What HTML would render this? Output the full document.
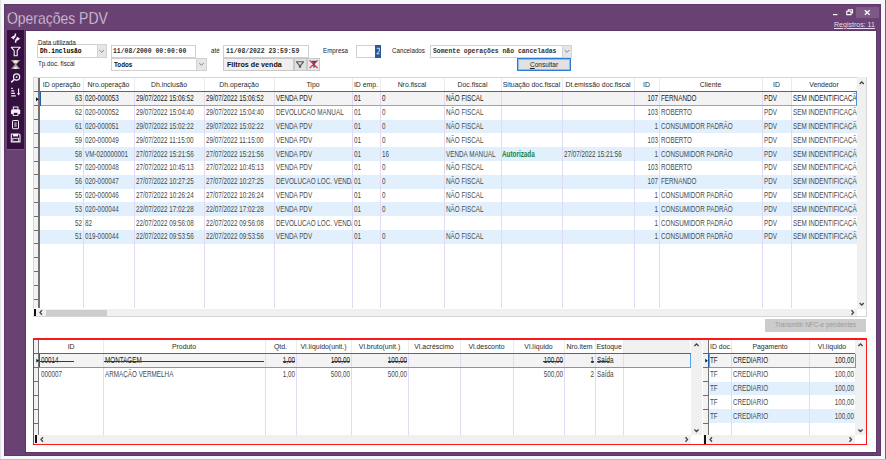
<!DOCTYPE html><html><head><meta charset="utf-8"><style>
*{margin:0;padding:0;box-sizing:border-box}
html,body{width:886px;height:460px;overflow:hidden;background:#fff}
body{position:relative;font-family:"Liberation Sans",sans-serif}
div{position:absolute}
.t{white-space:pre;line-height:1}
</style></head><body>
<div style="left:0px;top:0px;width:886px;height:460px;background:#f6f7fb"></div>
<div style="left:0px;top:0px;width:1px;height:460px;background:#e4e4e4"></div>
<div style="left:885px;top:0px;width:1px;height:460px;background:#6c6c6c"></div>
<div style="left:0px;top:459px;width:886px;height:1px;background:#bcbcbc"></div>
<div style="left:4px;top:4px;width:877px;height:452px;background:#694273;border:1px solid #5e3668"></div>
<div style="left:26px;top:31px;width:850px;height:421px;background:#ffffff;box-shadow:0 0 0 1px #5e3668"></div>
<div style="left:7px;top:30px;width:17px;height:119px;background:#340f40"></div>
<div class="t" style="left:7.3px;top:10.6px;transform:scaleX(0.872);transform-origin:left top;font-size:16px;color:#e6dcea;-webkit-text-stroke:0.35px #694273">Operações PDV</div>
<div style="left:856px;top:7px;width:23px;height:11px;background:#7c5a86"></div>
<svg style="position:absolute;left:0;top:0;overflow:visible" width="1" height="1"><path d="M833 14.6h4.4" stroke="#fff" stroke-width="1.2"/><path d="M846.8 11.3h4.2v3.3h-4.2z M848.3 11.3v-1.6h4.2v3.3h-1.5" fill="none" stroke="#fff" stroke-width="1.1"/><path d="M864.8 10.2l4.8 4.6M869.6 10.2l-4.8 4.6" stroke="#fff" stroke-width="1.2"/></svg>
<div class="t" style="left:834.2px;top:20.6px;transform:scaleX(0.925);transform-origin:left top;font-size:7.6px;color:#e4dcea;text-decoration:underline">Registros: 11</div>
<div class="t" style="left:37.8px;top:38.8px;transform:scaleX(0.78);transform-origin:left top;font-size:8px;color:#222;z-index:5">Data utilizada</div>
<div class="t" style="left:37.8px;top:60.4px;transform:scaleX(0.78);transform-origin:left top;font-size:8px;color:#222">Tp.doc. fiscal</div>
<div style="left:37px;top:44px;width:70px;height:14px;background:#fff;border:1px solid #d0d0d0"></div>
<div style="left:96.5px;top:44px;width:10.5px;height:14px;background:#e6e6e6;border:1px solid #d2d2d2"></div>
<svg style="position:absolute;left:0;top:0;overflow:visible" width="1" height="1"><path d="M99.45 50.0l2.3 2.3l2.3 -2.3" fill="none" stroke="#6a6a6a" stroke-width="0.8"/></svg>
<div class="t" style="left:40px;top:47.8px;transform:scaleX(0.85);transform-origin:left top;font-family:'Liberation Mono',monospace;font-size:7.4px;color:#333;font-weight:bold;color:#000">Dh.inclusão</div>
<div style="left:110.5px;top:44.5px;width:85.5px;height:13.0px;background:#fff;border:1px solid #d0d0d0"></div>
<div class="t" style="left:113px;top:47.8px;transform:scaleX(0.87);transform-origin:left top;font-family:'Liberation Mono',monospace;font-size:7.4px;color:#333;font-weight:bold">11/08/2000 00:00:00</div>
<div style="left:110.5px;top:57.5px;width:96.5px;height:13.0px;background:#fff;border:1px solid #d0d0d0"></div>
<div style="left:196px;top:57.5px;width:11px;height:13.0px;background:#e6e6e6;border:1px solid #d2d2d2"></div>
<svg style="position:absolute;left:0;top:0;overflow:visible" width="1" height="1"><path d="M199.2 63.0l2.3 2.3l2.3 -2.3" fill="none" stroke="#6a6a6a" stroke-width="0.8"/></svg>
<div class="t" style="left:114px;top:61.8px;transform:scaleX(0.92);transform-origin:left top;font-size:6.8px;font-weight:bold;color:#111">Todos</div>
<div class="t" style="left:210.5px;top:47.2px;transform:scaleX(0.78);transform-origin:left top;font-size:8px;color:#222">até</div>
<div style="left:223px;top:44.5px;width:86px;height:13.0px;background:#fff;border:1px solid #d0d0d0"></div>
<div class="t" style="left:226px;top:47.8px;transform:scaleX(0.87);transform-origin:left top;font-family:'Liberation Mono',monospace;font-size:7.4px;color:#333;font-weight:bold">11/08/2022 23:59:59</div>
<div style="left:223px;top:57.5px;width:71px;height:13.0px;background:#efefef;border:1px solid #c8c8c8"></div>
<div class="t" style="left:226.5px;top:60.8px;transform:scaleX(0.94);transform-origin:left top;font-size:7.6px;font-weight:bold;color:#111">Filtros de venda</div>
<div style="left:293.5px;top:57.5px;width:13.0px;height:13.0px;background:#e1e1e1;border:1px solid #c8c8c8"></div>
<svg style="position:absolute;left:0;top:0;overflow:visible" width="1" height="1"><path d="M296.5 61.8h7l-2.9 3.5v1.8h-1.2v-1.8z" fill="none" stroke="#555" stroke-width="1.1" stroke-linejoin="round"/></svg>
<div style="left:307px;top:57.5px;width:13px;height:13.0px;background:#e8e8e8;border:1px solid #c8c8c8"></div>
<svg style="position:absolute;left:0;top:0;overflow:visible" width="1" height="1"><path d="M311.2 60.8h5.6l-2 2.6v4h-1.6v-4z" fill="#1d55b8"/><path d="M309.6 60.4l8 7.8M317.6 60.4l-8 7.8" stroke="#f01818" stroke-width="1.15"/></svg>
<div class="t" style="left:323.3px;top:47.2px;transform:scaleX(0.78);transform-origin:left top;font-size:8px;color:#222">Empresa</div>
<div style="left:356px;top:44.5px;width:25px;height:13.0px;background:#fff;border:1px solid #d0d0d0"></div>
<div style="left:375px;top:44.5px;width:6px;height:13.0px;background:#2c5a98"></div>
<svg style="position:absolute;left:0;top:0;overflow:visible" width="1" height="1"><path d="M376.8 48.3h2.6v2.5M379.4 51l-2.6 2.8h2.6" fill="none" stroke="#e8eef8" stroke-width="0.9"/></svg>
<div class="t" style="left:391.5px;top:47.2px;transform:scaleX(0.78);transform-origin:left top;font-size:8px;color:#222">Cancelados</div>
<div style="left:429.5px;top:44.5px;width:142.5px;height:13.0px;background:#fff;border:1px solid #d0d0d0"></div>
<div style="left:562px;top:44.5px;width:10px;height:13.0px;background:#e6e6e6;border:1px solid #d2d2d2"></div>
<svg style="position:absolute;left:0;top:0;overflow:visible" width="1" height="1"><path d="M564.7 50.0l2.3 2.3l2.3 -2.3" fill="none" stroke="#6a6a6a" stroke-width="0.8"/></svg>
<div class="t" style="left:432.5px;top:47.8px;transform:scaleX(0.87);transform-origin:left top;font-family:'Liberation Mono',monospace;font-size:7.4px;color:#333;font-weight:bold">Somente operações não canceladas</div>
<div style="left:517px;top:58px;width:54px;height:13px;background:#e1e1e1;border:1px solid #2f7ad6;box-shadow:inset 0 0 0 1px #8fbbec"></div>
<div class="t" style="left:517px;top:61.1px;width:54px;text-align:center;transform:scaleX(0.94);transform-origin:center top;font-size:7px;color:#222"><u>C</u>onsultar</div>
<div style="left:33px;top:77px;width:834px;height:240px;background:#fff;border:1px solid #d6d6d6"></div>
<div style="left:33px;top:77px;width:824px;height:15px;background:#fff"></div>
<div style="left:33px;top:77px;width:824px;height:1px;background:#d6d6d6"></div>
<div style="left:33px;top:78px;width:7px;height:230px;background:#f2f2f2"></div>
<div style="left:40px;top:92.0px;width:817px;height:13.799999999999997px;background:#f3f3f3"></div>
<div style="left:40px;top:105.8px;width:817px;height:13.799999999999997px;background:#ffffff"></div>
<div style="left:40px;top:119.6px;width:817px;height:13.800000000000011px;background:#e1f0fc"></div>
<div style="left:40px;top:133.4px;width:817px;height:13.800000000000011px;background:#ffffff"></div>
<div style="left:40px;top:147.2px;width:817px;height:13.800000000000011px;background:#e1f0fc"></div>
<div style="left:40px;top:161.0px;width:817px;height:13.800000000000011px;background:#ffffff"></div>
<div style="left:40px;top:174.8px;width:817px;height:13.800000000000011px;background:#e1f0fc"></div>
<div style="left:40px;top:188.60000000000002px;width:817px;height:13.800000000000011px;background:#ffffff"></div>
<div style="left:40px;top:202.4px;width:817px;height:13.800000000000011px;background:#e1f0fc"></div>
<div style="left:40px;top:216.2px;width:817px;height:13.800000000000011px;background:#ffffff"></div>
<div style="left:40px;top:230.0px;width:817px;height:13.800000000000011px;background:#e1f0fc"></div>
<div style="left:791px;top:92.0px;width:66px;height:13.799999999999997px;background:#ffffff"></div>
<div style="left:33px;top:105px;width:7px;height:1px;background:#6e6e6e"></div>
<div style="left:33px;top:119px;width:7px;height:1px;background:#6e6e6e"></div>
<div style="left:33px;top:133px;width:7px;height:1px;background:#6e6e6e"></div>
<div style="left:33px;top:147px;width:7px;height:1px;background:#6e6e6e"></div>
<div style="left:33px;top:161px;width:7px;height:1px;background:#6e6e6e"></div>
<div style="left:33px;top:174px;width:7px;height:1px;background:#6e6e6e"></div>
<div style="left:33px;top:188px;width:7px;height:1px;background:#6e6e6e"></div>
<div style="left:33px;top:202px;width:7px;height:1px;background:#6e6e6e"></div>
<div style="left:33px;top:216px;width:7px;height:1px;background:#6e6e6e"></div>
<div style="left:33px;top:230px;width:7px;height:1px;background:#6e6e6e"></div>
<div style="left:33px;top:243px;width:7px;height:1px;background:#6e6e6e"></div>
<div style="left:33px;top:257px;width:7px;height:1px;background:#6e6e6e"></div>
<div style="left:33px;top:271px;width:7px;height:1px;background:#6e6e6e"></div>
<div style="left:33px;top:285px;width:7px;height:1px;background:#6e6e6e"></div>
<div style="left:33px;top:299px;width:7px;height:1px;background:#6e6e6e"></div>
<div style="left:38px;top:78px;width:2px;height:230px;background:#737373"></div>
<div style="left:83px;top:78px;width:1px;height:13px;background:#ebebeb"></div>
<div style="left:83px;top:92px;width:1px;height:216px;background:#e0dbf4"></div>
<div style="left:134px;top:78px;width:1px;height:13px;background:#ebebeb"></div>
<div style="left:134px;top:92px;width:1px;height:216px;background:#e0dbf4"></div>
<div style="left:204px;top:78px;width:1px;height:13px;background:#ebebeb"></div>
<div style="left:204px;top:92px;width:1px;height:216px;background:#e0dbf4"></div>
<div style="left:274px;top:78px;width:1px;height:13px;background:#ebebeb"></div>
<div style="left:274px;top:92px;width:1px;height:216px;background:#e0dbf4"></div>
<div style="left:352px;top:78px;width:1px;height:13px;background:#ebebeb"></div>
<div style="left:352px;top:92px;width:1px;height:216px;background:#e0dbf4"></div>
<div style="left:380px;top:78px;width:1px;height:13px;background:#ebebeb"></div>
<div style="left:380px;top:92px;width:1px;height:216px;background:#e0dbf4"></div>
<div style="left:444px;top:78px;width:1px;height:13px;background:#ebebeb"></div>
<div style="left:444px;top:92px;width:1px;height:216px;background:#e0dbf4"></div>
<div style="left:501px;top:78px;width:1px;height:13px;background:#ebebeb"></div>
<div style="left:501px;top:92px;width:1px;height:216px;background:#e0dbf4"></div>
<div style="left:562px;top:78px;width:1px;height:13px;background:#ebebeb"></div>
<div style="left:562px;top:92px;width:1px;height:216px;background:#e0dbf4"></div>
<div style="left:634px;top:78px;width:1px;height:13px;background:#ebebeb"></div>
<div style="left:634px;top:92px;width:1px;height:216px;background:#e0dbf4"></div>
<div style="left:659px;top:78px;width:1px;height:13px;background:#ebebeb"></div>
<div style="left:659px;top:92px;width:1px;height:216px;background:#e0dbf4"></div>
<div style="left:762px;top:78px;width:1px;height:13px;background:#ebebeb"></div>
<div style="left:762px;top:92px;width:1px;height:216px;background:#e0dbf4"></div>
<div style="left:791px;top:78px;width:1px;height:13px;background:#ebebeb"></div>
<div style="left:791px;top:92px;width:1px;height:216px;background:#e0dbf4"></div>
<div style="left:33px;top:91px;width:824px;height:1px;background:#646464"></div>
<div class="t" style="left:40px;top:81.7px;width:43px;text-align:center;font-size:6.9px;color:#2a2a2a">ID operação</div>
<div class="t" style="left:83px;top:81.7px;width:51px;text-align:center;font-size:6.9px;color:#2a2a2a">Nro.operação</div>
<div class="t" style="left:134px;top:81.7px;width:70px;text-align:center;font-size:6.9px;color:#2a2a2a">Dh.inclusão</div>
<div class="t" style="left:204px;top:81.7px;width:70px;text-align:center;font-size:6.9px;color:#2a2a2a">Dh.operação</div>
<div class="t" style="left:274px;top:81.7px;width:78px;text-align:center;font-size:6.9px;color:#2a2a2a">Tipo</div>
<div class="t" style="left:352px;top:81.7px;width:28px;text-align:center;font-size:6.9px;color:#2a2a2a">ID emp.</div>
<div class="t" style="left:380px;top:81.7px;width:64px;text-align:center;font-size:6.9px;color:#2a2a2a">Nro.fiscal</div>
<div class="t" style="left:444px;top:81.7px;width:57px;text-align:center;font-size:6.9px;color:#2a2a2a">Doc.fiscal</div>
<div class="t" style="left:501px;top:81.7px;width:61px;text-align:center;font-size:6.9px;color:#2a2a2a">Situação doc.fiscal</div>
<div class="t" style="left:562px;top:81.7px;width:72px;text-align:center;font-size:6.9px;color:#2a2a2a">Dt.emissão doc.fiscal</div>
<div class="t" style="left:634px;top:81.7px;width:25px;text-align:center;font-size:6.9px;color:#2a2a2a">ID</div>
<div class="t" style="left:659px;top:81.7px;width:103px;text-align:center;font-size:6.9px;color:#2a2a2a">Cliente</div>
<div class="t" style="left:762px;top:81.7px;width:29px;text-align:center;font-size:6.9px;color:#2a2a2a">ID</div>
<div class="t" style="left:791px;top:81.7px;width:66px;text-align:center;font-size:6.9px;color:#2a2a2a">Vendedor</div>
<div class="t" style="left:40px;top:94.3px;width:42px;text-align:right;transform:scaleX(0.742);transform-origin:right top;font-size:8.5px;color:#222">63</div>
<div style="left:84px;top:91.3px;width:50px;height:11px;overflow:hidden"><div class="t" style="left:0.5px;top:3px;transform:scaleX(0.742);transform-origin:left top;font-size:8.5px;color:#222">020-000053</div></div>
<div style="left:135px;top:91.3px;width:69px;height:11px;overflow:hidden"><div class="t" style="left:0.5px;top:3px;transform:scaleX(0.742);transform-origin:left top;font-size:8.5px;color:#222">29/07/2022 15:06:52</div></div>
<div style="left:205px;top:91.3px;width:69px;height:11px;overflow:hidden"><div class="t" style="left:0.5px;top:3px;transform:scaleX(0.742);transform-origin:left top;font-size:8.5px;color:#222">29/07/2022 15:06:52</div></div>
<div style="left:275px;top:91.3px;width:77px;height:11px;overflow:hidden"><div class="t" style="left:0.5px;top:3px;transform:scaleX(0.742);transform-origin:left top;font-size:8.5px;color:#222">VENDA PDV</div></div>
<div style="left:353px;top:91.3px;width:27px;height:11px;overflow:hidden"><div class="t" style="left:0.5px;top:3px;transform:scaleX(0.742);transform-origin:left top;font-size:8.5px;color:#222">01</div></div>
<div style="left:381px;top:91.3px;width:63px;height:11px;overflow:hidden"><div class="t" style="left:0.5px;top:3px;transform:scaleX(0.742);transform-origin:left top;font-size:8.5px;color:#222">0</div></div>
<div style="left:445px;top:91.3px;width:56px;height:11px;overflow:hidden"><div class="t" style="left:0.5px;top:3px;transform:scaleX(0.742);transform-origin:left top;font-size:8.5px;color:#222">NÃO FISCAL</div></div>
<div class="t" style="left:634px;top:94.3px;width:24px;text-align:right;transform:scaleX(0.742);transform-origin:right top;font-size:8.5px;color:#222">107</div>
<div style="left:660px;top:91.3px;width:102px;height:11px;overflow:hidden"><div class="t" style="left:0.5px;top:3px;transform:scaleX(0.742);transform-origin:left top;font-size:8.5px;color:#222">FERNANDO</div></div>
<div style="left:763px;top:91.3px;width:28px;height:11px;overflow:hidden"><div class="t" style="left:0.5px;top:3px;transform:scaleX(0.742);transform-origin:left top;font-size:8.5px;color:#222">PDV</div></div>
<div style="left:792px;top:91.3px;width:65px;height:11px;overflow:hidden"><div class="t" style="left:0.5px;top:3px;transform:scaleX(0.742);transform-origin:left top;font-size:8.5px;color:#222">SEM INDENTIFICAÇÃO</div></div>
<div class="t" style="left:40px;top:108.1px;width:42px;text-align:right;transform:scaleX(0.742);transform-origin:right top;font-size:8.5px;color:#4a4a4a">62</div>
<div style="left:84px;top:105.1px;width:50px;height:11px;overflow:hidden"><div class="t" style="left:0.5px;top:3px;transform:scaleX(0.742);transform-origin:left top;font-size:8.5px;color:#4a4a4a">020-000052</div></div>
<div style="left:135px;top:105.1px;width:69px;height:11px;overflow:hidden"><div class="t" style="left:0.5px;top:3px;transform:scaleX(0.742);transform-origin:left top;font-size:8.5px;color:#4a4a4a">29/07/2022 15:04:40</div></div>
<div style="left:205px;top:105.1px;width:69px;height:11px;overflow:hidden"><div class="t" style="left:0.5px;top:3px;transform:scaleX(0.742);transform-origin:left top;font-size:8.5px;color:#4a4a4a">29/07/2022 15:04:40</div></div>
<div style="left:275px;top:105.1px;width:77px;height:11px;overflow:hidden"><div class="t" style="left:0.5px;top:3px;transform:scaleX(0.742);transform-origin:left top;font-size:8.5px;color:#4a4a4a">DEVOLUCAO MANUAL</div></div>
<div style="left:353px;top:105.1px;width:27px;height:11px;overflow:hidden"><div class="t" style="left:0.5px;top:3px;transform:scaleX(0.742);transform-origin:left top;font-size:8.5px;color:#4a4a4a">01</div></div>
<div style="left:381px;top:105.1px;width:63px;height:11px;overflow:hidden"><div class="t" style="left:0.5px;top:3px;transform:scaleX(0.742);transform-origin:left top;font-size:8.5px;color:#4a4a4a">0</div></div>
<div style="left:445px;top:105.1px;width:56px;height:11px;overflow:hidden"><div class="t" style="left:0.5px;top:3px;transform:scaleX(0.742);transform-origin:left top;font-size:8.5px;color:#4a4a4a">NÃO FISCAL</div></div>
<div class="t" style="left:634px;top:108.1px;width:24px;text-align:right;transform:scaleX(0.742);transform-origin:right top;font-size:8.5px;color:#4a4a4a">103</div>
<div style="left:660px;top:105.1px;width:102px;height:11px;overflow:hidden"><div class="t" style="left:0.5px;top:3px;transform:scaleX(0.742);transform-origin:left top;font-size:8.5px;color:#4a4a4a">ROBERTO</div></div>
<div style="left:763px;top:105.1px;width:28px;height:11px;overflow:hidden"><div class="t" style="left:0.5px;top:3px;transform:scaleX(0.742);transform-origin:left top;font-size:8.5px;color:#4a4a4a">PDV</div></div>
<div style="left:792px;top:105.1px;width:65px;height:11px;overflow:hidden"><div class="t" style="left:0.5px;top:3px;transform:scaleX(0.742);transform-origin:left top;font-size:8.5px;color:#4a4a4a">SEM INDENTIFICAÇÃO</div></div>
<div class="t" style="left:40px;top:121.89999999999999px;width:42px;text-align:right;transform:scaleX(0.742);transform-origin:right top;font-size:8.5px;color:#4a4a4a">61</div>
<div style="left:84px;top:118.89999999999999px;width:50px;height:11px;overflow:hidden"><div class="t" style="left:0.5px;top:3px;transform:scaleX(0.742);transform-origin:left top;font-size:8.5px;color:#4a4a4a">020-000051</div></div>
<div style="left:135px;top:118.89999999999999px;width:69px;height:11px;overflow:hidden"><div class="t" style="left:0.5px;top:3px;transform:scaleX(0.742);transform-origin:left top;font-size:8.5px;color:#4a4a4a">29/07/2022 15:02:22</div></div>
<div style="left:205px;top:118.89999999999999px;width:69px;height:11px;overflow:hidden"><div class="t" style="left:0.5px;top:3px;transform:scaleX(0.742);transform-origin:left top;font-size:8.5px;color:#4a4a4a">29/07/2022 15:02:22</div></div>
<div style="left:275px;top:118.89999999999999px;width:77px;height:11px;overflow:hidden"><div class="t" style="left:0.5px;top:3px;transform:scaleX(0.742);transform-origin:left top;font-size:8.5px;color:#4a4a4a">VENDA PDV</div></div>
<div style="left:353px;top:118.89999999999999px;width:27px;height:11px;overflow:hidden"><div class="t" style="left:0.5px;top:3px;transform:scaleX(0.742);transform-origin:left top;font-size:8.5px;color:#4a4a4a">01</div></div>
<div style="left:381px;top:118.89999999999999px;width:63px;height:11px;overflow:hidden"><div class="t" style="left:0.5px;top:3px;transform:scaleX(0.742);transform-origin:left top;font-size:8.5px;color:#4a4a4a">0</div></div>
<div style="left:445px;top:118.89999999999999px;width:56px;height:11px;overflow:hidden"><div class="t" style="left:0.5px;top:3px;transform:scaleX(0.742);transform-origin:left top;font-size:8.5px;color:#4a4a4a">NÃO FISCAL</div></div>
<div class="t" style="left:634px;top:121.89999999999999px;width:24px;text-align:right;transform:scaleX(0.742);transform-origin:right top;font-size:8.5px;color:#4a4a4a">1</div>
<div style="left:660px;top:118.89999999999999px;width:102px;height:11px;overflow:hidden"><div class="t" style="left:0.5px;top:3px;transform:scaleX(0.742);transform-origin:left top;font-size:8.5px;color:#4a4a4a">CONSUMIDOR PADRÃO</div></div>
<div style="left:763px;top:118.89999999999999px;width:28px;height:11px;overflow:hidden"><div class="t" style="left:0.5px;top:3px;transform:scaleX(0.742);transform-origin:left top;font-size:8.5px;color:#4a4a4a">PDV</div></div>
<div style="left:792px;top:118.89999999999999px;width:65px;height:11px;overflow:hidden"><div class="t" style="left:0.5px;top:3px;transform:scaleX(0.742);transform-origin:left top;font-size:8.5px;color:#4a4a4a">SEM INDENTIFICAÇÃO</div></div>
<div class="t" style="left:40px;top:135.70000000000002px;width:42px;text-align:right;transform:scaleX(0.742);transform-origin:right top;font-size:8.5px;color:#4a4a4a">59</div>
<div style="left:84px;top:132.70000000000002px;width:50px;height:11px;overflow:hidden"><div class="t" style="left:0.5px;top:3px;transform:scaleX(0.742);transform-origin:left top;font-size:8.5px;color:#4a4a4a">020-000049</div></div>
<div style="left:135px;top:132.70000000000002px;width:69px;height:11px;overflow:hidden"><div class="t" style="left:0.5px;top:3px;transform:scaleX(0.742);transform-origin:left top;font-size:8.5px;color:#4a4a4a">29/07/2022 11:15:00</div></div>
<div style="left:205px;top:132.70000000000002px;width:69px;height:11px;overflow:hidden"><div class="t" style="left:0.5px;top:3px;transform:scaleX(0.742);transform-origin:left top;font-size:8.5px;color:#4a4a4a">29/07/2022 11:15:00</div></div>
<div style="left:275px;top:132.70000000000002px;width:77px;height:11px;overflow:hidden"><div class="t" style="left:0.5px;top:3px;transform:scaleX(0.742);transform-origin:left top;font-size:8.5px;color:#4a4a4a">VENDA PDV</div></div>
<div style="left:353px;top:132.70000000000002px;width:27px;height:11px;overflow:hidden"><div class="t" style="left:0.5px;top:3px;transform:scaleX(0.742);transform-origin:left top;font-size:8.5px;color:#4a4a4a">01</div></div>
<div style="left:381px;top:132.70000000000002px;width:63px;height:11px;overflow:hidden"><div class="t" style="left:0.5px;top:3px;transform:scaleX(0.742);transform-origin:left top;font-size:8.5px;color:#4a4a4a">0</div></div>
<div style="left:445px;top:132.70000000000002px;width:56px;height:11px;overflow:hidden"><div class="t" style="left:0.5px;top:3px;transform:scaleX(0.742);transform-origin:left top;font-size:8.5px;color:#4a4a4a">NÃO FISCAL</div></div>
<div class="t" style="left:634px;top:135.70000000000002px;width:24px;text-align:right;transform:scaleX(0.742);transform-origin:right top;font-size:8.5px;color:#4a4a4a">103</div>
<div style="left:660px;top:132.70000000000002px;width:102px;height:11px;overflow:hidden"><div class="t" style="left:0.5px;top:3px;transform:scaleX(0.742);transform-origin:left top;font-size:8.5px;color:#4a4a4a">ROBERTO</div></div>
<div style="left:763px;top:132.70000000000002px;width:28px;height:11px;overflow:hidden"><div class="t" style="left:0.5px;top:3px;transform:scaleX(0.742);transform-origin:left top;font-size:8.5px;color:#4a4a4a">PDV</div></div>
<div style="left:792px;top:132.70000000000002px;width:65px;height:11px;overflow:hidden"><div class="t" style="left:0.5px;top:3px;transform:scaleX(0.742);transform-origin:left top;font-size:8.5px;color:#4a4a4a">SEM INDENTIFICAÇÃO</div></div>
<div class="t" style="left:40px;top:149.5px;width:42px;text-align:right;transform:scaleX(0.742);transform-origin:right top;font-size:8.5px;color:#4a4a4a">58</div>
<div style="left:84px;top:146.5px;width:50px;height:11px;overflow:hidden"><div class="t" style="left:0.5px;top:3px;transform:scaleX(0.742);transform-origin:left top;font-size:8.5px;color:#4a4a4a">VM-020000001</div></div>
<div style="left:135px;top:146.5px;width:69px;height:11px;overflow:hidden"><div class="t" style="left:0.5px;top:3px;transform:scaleX(0.742);transform-origin:left top;font-size:8.5px;color:#4a4a4a">27/07/2022 15:21:56</div></div>
<div style="left:205px;top:146.5px;width:69px;height:11px;overflow:hidden"><div class="t" style="left:0.5px;top:3px;transform:scaleX(0.742);transform-origin:left top;font-size:8.5px;color:#4a4a4a">27/07/2022 15:21:56</div></div>
<div style="left:275px;top:146.5px;width:77px;height:11px;overflow:hidden"><div class="t" style="left:0.5px;top:3px;transform:scaleX(0.742);transform-origin:left top;font-size:8.5px;color:#4a4a4a">VENDA PDV</div></div>
<div style="left:353px;top:146.5px;width:27px;height:11px;overflow:hidden"><div class="t" style="left:0.5px;top:3px;transform:scaleX(0.742);transform-origin:left top;font-size:8.5px;color:#4a4a4a">01</div></div>
<div style="left:381px;top:146.5px;width:63px;height:11px;overflow:hidden"><div class="t" style="left:0.5px;top:3px;transform:scaleX(0.742);transform-origin:left top;font-size:8.5px;color:#4a4a4a">16</div></div>
<div style="left:445px;top:146.5px;width:56px;height:11px;overflow:hidden"><div class="t" style="left:0.5px;top:3px;transform:scaleX(0.742);transform-origin:left top;font-size:8.5px;color:#4a4a4a">VENDA MANUAL</div></div>
<div class="t" style="left:502.2px;top:149.5px;transform:scaleX(0.745);transform-origin:left top;font-size:8.5px;font-weight:bold;color:#17803c">Autorizada</div>
<div style="left:563px;top:146.5px;width:71px;height:11px;overflow:hidden"><div class="t" style="left:0.5px;top:3px;transform:scaleX(0.742);transform-origin:left top;font-size:8.5px;color:#4a4a4a">27/07/2022 15:21:56</div></div>
<div class="t" style="left:634px;top:149.5px;width:24px;text-align:right;transform:scaleX(0.742);transform-origin:right top;font-size:8.5px;color:#4a4a4a">1</div>
<div style="left:660px;top:146.5px;width:102px;height:11px;overflow:hidden"><div class="t" style="left:0.5px;top:3px;transform:scaleX(0.742);transform-origin:left top;font-size:8.5px;color:#4a4a4a">CONSUMIDOR PADRÃO</div></div>
<div style="left:763px;top:146.5px;width:28px;height:11px;overflow:hidden"><div class="t" style="left:0.5px;top:3px;transform:scaleX(0.742);transform-origin:left top;font-size:8.5px;color:#4a4a4a">PDV</div></div>
<div style="left:792px;top:146.5px;width:65px;height:11px;overflow:hidden"><div class="t" style="left:0.5px;top:3px;transform:scaleX(0.742);transform-origin:left top;font-size:8.5px;color:#4a4a4a">SEM INDENTIFICAÇÃO</div></div>
<div class="t" style="left:40px;top:163.3px;width:42px;text-align:right;transform:scaleX(0.742);transform-origin:right top;font-size:8.5px;color:#4a4a4a">57</div>
<div style="left:84px;top:160.3px;width:50px;height:11px;overflow:hidden"><div class="t" style="left:0.5px;top:3px;transform:scaleX(0.742);transform-origin:left top;font-size:8.5px;color:#4a4a4a">020-000048</div></div>
<div style="left:135px;top:160.3px;width:69px;height:11px;overflow:hidden"><div class="t" style="left:0.5px;top:3px;transform:scaleX(0.742);transform-origin:left top;font-size:8.5px;color:#4a4a4a">27/07/2022 10:45:13</div></div>
<div style="left:205px;top:160.3px;width:69px;height:11px;overflow:hidden"><div class="t" style="left:0.5px;top:3px;transform:scaleX(0.742);transform-origin:left top;font-size:8.5px;color:#4a4a4a">27/07/2022 10:45:13</div></div>
<div style="left:275px;top:160.3px;width:77px;height:11px;overflow:hidden"><div class="t" style="left:0.5px;top:3px;transform:scaleX(0.742);transform-origin:left top;font-size:8.5px;color:#4a4a4a">VENDA PDV</div></div>
<div style="left:353px;top:160.3px;width:27px;height:11px;overflow:hidden"><div class="t" style="left:0.5px;top:3px;transform:scaleX(0.742);transform-origin:left top;font-size:8.5px;color:#4a4a4a">01</div></div>
<div style="left:381px;top:160.3px;width:63px;height:11px;overflow:hidden"><div class="t" style="left:0.5px;top:3px;transform:scaleX(0.742);transform-origin:left top;font-size:8.5px;color:#4a4a4a">0</div></div>
<div style="left:445px;top:160.3px;width:56px;height:11px;overflow:hidden"><div class="t" style="left:0.5px;top:3px;transform:scaleX(0.742);transform-origin:left top;font-size:8.5px;color:#4a4a4a">NÃO FISCAL</div></div>
<div class="t" style="left:634px;top:163.3px;width:24px;text-align:right;transform:scaleX(0.742);transform-origin:right top;font-size:8.5px;color:#4a4a4a">103</div>
<div style="left:660px;top:160.3px;width:102px;height:11px;overflow:hidden"><div class="t" style="left:0.5px;top:3px;transform:scaleX(0.742);transform-origin:left top;font-size:8.5px;color:#4a4a4a">ROBERTO</div></div>
<div style="left:763px;top:160.3px;width:28px;height:11px;overflow:hidden"><div class="t" style="left:0.5px;top:3px;transform:scaleX(0.742);transform-origin:left top;font-size:8.5px;color:#4a4a4a">PDV</div></div>
<div style="left:792px;top:160.3px;width:65px;height:11px;overflow:hidden"><div class="t" style="left:0.5px;top:3px;transform:scaleX(0.742);transform-origin:left top;font-size:8.5px;color:#4a4a4a">SEM INDENTIFICAÇÃO</div></div>
<div class="t" style="left:40px;top:177.10000000000002px;width:42px;text-align:right;transform:scaleX(0.742);transform-origin:right top;font-size:8.5px;color:#4a4a4a">56</div>
<div style="left:84px;top:174.10000000000002px;width:50px;height:11px;overflow:hidden"><div class="t" style="left:0.5px;top:3px;transform:scaleX(0.742);transform-origin:left top;font-size:8.5px;color:#4a4a4a">020-000047</div></div>
<div style="left:135px;top:174.10000000000002px;width:69px;height:11px;overflow:hidden"><div class="t" style="left:0.5px;top:3px;transform:scaleX(0.742);transform-origin:left top;font-size:8.5px;color:#4a4a4a">27/07/2022 10:27:25</div></div>
<div style="left:205px;top:174.10000000000002px;width:69px;height:11px;overflow:hidden"><div class="t" style="left:0.5px;top:3px;transform:scaleX(0.742);transform-origin:left top;font-size:8.5px;color:#4a4a4a">27/07/2022 10:27:25</div></div>
<div style="left:275px;top:174.10000000000002px;width:77px;height:11px;overflow:hidden"><div class="t" style="left:0.5px;top:3px;transform:scaleX(0.742);transform-origin:left top;font-size:8.5px;color:#4a4a4a">DEVOLUCAO LOC. VENDA</div></div>
<div style="left:353px;top:174.10000000000002px;width:27px;height:11px;overflow:hidden"><div class="t" style="left:0.5px;top:3px;transform:scaleX(0.742);transform-origin:left top;font-size:8.5px;color:#4a4a4a">01</div></div>
<div style="left:381px;top:174.10000000000002px;width:63px;height:11px;overflow:hidden"><div class="t" style="left:0.5px;top:3px;transform:scaleX(0.742);transform-origin:left top;font-size:8.5px;color:#4a4a4a">0</div></div>
<div style="left:445px;top:174.10000000000002px;width:56px;height:11px;overflow:hidden"><div class="t" style="left:0.5px;top:3px;transform:scaleX(0.742);transform-origin:left top;font-size:8.5px;color:#4a4a4a">NÃO FISCAL</div></div>
<div class="t" style="left:634px;top:177.10000000000002px;width:24px;text-align:right;transform:scaleX(0.742);transform-origin:right top;font-size:8.5px;color:#4a4a4a">107</div>
<div style="left:660px;top:174.10000000000002px;width:102px;height:11px;overflow:hidden"><div class="t" style="left:0.5px;top:3px;transform:scaleX(0.742);transform-origin:left top;font-size:8.5px;color:#4a4a4a">FERNANDO</div></div>
<div style="left:763px;top:174.10000000000002px;width:28px;height:11px;overflow:hidden"><div class="t" style="left:0.5px;top:3px;transform:scaleX(0.742);transform-origin:left top;font-size:8.5px;color:#4a4a4a">PDV</div></div>
<div style="left:792px;top:174.10000000000002px;width:65px;height:11px;overflow:hidden"><div class="t" style="left:0.5px;top:3px;transform:scaleX(0.742);transform-origin:left top;font-size:8.5px;color:#4a4a4a">SEM INDENTIFICAÇÃO</div></div>
<div class="t" style="left:40px;top:190.90000000000003px;width:42px;text-align:right;transform:scaleX(0.742);transform-origin:right top;font-size:8.5px;color:#4a4a4a">55</div>
<div style="left:84px;top:187.90000000000003px;width:50px;height:11px;overflow:hidden"><div class="t" style="left:0.5px;top:3px;transform:scaleX(0.742);transform-origin:left top;font-size:8.5px;color:#4a4a4a">020-000046</div></div>
<div style="left:135px;top:187.90000000000003px;width:69px;height:11px;overflow:hidden"><div class="t" style="left:0.5px;top:3px;transform:scaleX(0.742);transform-origin:left top;font-size:8.5px;color:#4a4a4a">27/07/2022 10:26:24</div></div>
<div style="left:205px;top:187.90000000000003px;width:69px;height:11px;overflow:hidden"><div class="t" style="left:0.5px;top:3px;transform:scaleX(0.742);transform-origin:left top;font-size:8.5px;color:#4a4a4a">27/07/2022 10:26:24</div></div>
<div style="left:275px;top:187.90000000000003px;width:77px;height:11px;overflow:hidden"><div class="t" style="left:0.5px;top:3px;transform:scaleX(0.742);transform-origin:left top;font-size:8.5px;color:#4a4a4a">VENDA PDV</div></div>
<div style="left:353px;top:187.90000000000003px;width:27px;height:11px;overflow:hidden"><div class="t" style="left:0.5px;top:3px;transform:scaleX(0.742);transform-origin:left top;font-size:8.5px;color:#4a4a4a">01</div></div>
<div style="left:381px;top:187.90000000000003px;width:63px;height:11px;overflow:hidden"><div class="t" style="left:0.5px;top:3px;transform:scaleX(0.742);transform-origin:left top;font-size:8.5px;color:#4a4a4a">0</div></div>
<div style="left:445px;top:187.90000000000003px;width:56px;height:11px;overflow:hidden"><div class="t" style="left:0.5px;top:3px;transform:scaleX(0.742);transform-origin:left top;font-size:8.5px;color:#4a4a4a">NÃO FISCAL</div></div>
<div class="t" style="left:634px;top:190.90000000000003px;width:24px;text-align:right;transform:scaleX(0.742);transform-origin:right top;font-size:8.5px;color:#4a4a4a">1</div>
<div style="left:660px;top:187.90000000000003px;width:102px;height:11px;overflow:hidden"><div class="t" style="left:0.5px;top:3px;transform:scaleX(0.742);transform-origin:left top;font-size:8.5px;color:#4a4a4a">CONSUMIDOR PADRÃO</div></div>
<div style="left:763px;top:187.90000000000003px;width:28px;height:11px;overflow:hidden"><div class="t" style="left:0.5px;top:3px;transform:scaleX(0.742);transform-origin:left top;font-size:8.5px;color:#4a4a4a">PDV</div></div>
<div style="left:792px;top:187.90000000000003px;width:65px;height:11px;overflow:hidden"><div class="t" style="left:0.5px;top:3px;transform:scaleX(0.742);transform-origin:left top;font-size:8.5px;color:#4a4a4a">SEM INDENTIFICAÇÃO</div></div>
<div class="t" style="left:40px;top:204.70000000000002px;width:42px;text-align:right;transform:scaleX(0.742);transform-origin:right top;font-size:8.5px;color:#4a4a4a">53</div>
<div style="left:84px;top:201.70000000000002px;width:50px;height:11px;overflow:hidden"><div class="t" style="left:0.5px;top:3px;transform:scaleX(0.742);transform-origin:left top;font-size:8.5px;color:#4a4a4a">020-000044</div></div>
<div style="left:135px;top:201.70000000000002px;width:69px;height:11px;overflow:hidden"><div class="t" style="left:0.5px;top:3px;transform:scaleX(0.742);transform-origin:left top;font-size:8.5px;color:#4a4a4a">22/07/2022 17:02:28</div></div>
<div style="left:205px;top:201.70000000000002px;width:69px;height:11px;overflow:hidden"><div class="t" style="left:0.5px;top:3px;transform:scaleX(0.742);transform-origin:left top;font-size:8.5px;color:#4a4a4a">22/07/2022 17:02:28</div></div>
<div style="left:275px;top:201.70000000000002px;width:77px;height:11px;overflow:hidden"><div class="t" style="left:0.5px;top:3px;transform:scaleX(0.742);transform-origin:left top;font-size:8.5px;color:#4a4a4a">VENDA PDV</div></div>
<div style="left:353px;top:201.70000000000002px;width:27px;height:11px;overflow:hidden"><div class="t" style="left:0.5px;top:3px;transform:scaleX(0.742);transform-origin:left top;font-size:8.5px;color:#4a4a4a">01</div></div>
<div style="left:381px;top:201.70000000000002px;width:63px;height:11px;overflow:hidden"><div class="t" style="left:0.5px;top:3px;transform:scaleX(0.742);transform-origin:left top;font-size:8.5px;color:#4a4a4a">0</div></div>
<div style="left:445px;top:201.70000000000002px;width:56px;height:11px;overflow:hidden"><div class="t" style="left:0.5px;top:3px;transform:scaleX(0.742);transform-origin:left top;font-size:8.5px;color:#4a4a4a">NÃO FISCAL</div></div>
<div class="t" style="left:634px;top:204.70000000000002px;width:24px;text-align:right;transform:scaleX(0.742);transform-origin:right top;font-size:8.5px;color:#4a4a4a">1</div>
<div style="left:660px;top:201.70000000000002px;width:102px;height:11px;overflow:hidden"><div class="t" style="left:0.5px;top:3px;transform:scaleX(0.742);transform-origin:left top;font-size:8.5px;color:#4a4a4a">CONSUMIDOR PADRÃO</div></div>
<div style="left:763px;top:201.70000000000002px;width:28px;height:11px;overflow:hidden"><div class="t" style="left:0.5px;top:3px;transform:scaleX(0.742);transform-origin:left top;font-size:8.5px;color:#4a4a4a">PDV</div></div>
<div style="left:792px;top:201.70000000000002px;width:65px;height:11px;overflow:hidden"><div class="t" style="left:0.5px;top:3px;transform:scaleX(0.742);transform-origin:left top;font-size:8.5px;color:#4a4a4a">SEM INDENTIFICAÇÃO</div></div>
<div class="t" style="left:40px;top:218.5px;width:42px;text-align:right;transform:scaleX(0.742);transform-origin:right top;font-size:8.5px;color:#4a4a4a">52</div>
<div style="left:84px;top:215.5px;width:50px;height:11px;overflow:hidden"><div class="t" style="left:0.5px;top:3px;transform:scaleX(0.742);transform-origin:left top;font-size:8.5px;color:#4a4a4a">82</div></div>
<div style="left:135px;top:215.5px;width:69px;height:11px;overflow:hidden"><div class="t" style="left:0.5px;top:3px;transform:scaleX(0.742);transform-origin:left top;font-size:8.5px;color:#4a4a4a">22/07/2022 09:56:08</div></div>
<div style="left:205px;top:215.5px;width:69px;height:11px;overflow:hidden"><div class="t" style="left:0.5px;top:3px;transform:scaleX(0.742);transform-origin:left top;font-size:8.5px;color:#4a4a4a">22/07/2022 09:56:08</div></div>
<div style="left:275px;top:215.5px;width:77px;height:11px;overflow:hidden"><div class="t" style="left:0.5px;top:3px;transform:scaleX(0.742);transform-origin:left top;font-size:8.5px;color:#4a4a4a">DEVOLUCAO LOC. VENDA</div></div>
<div style="left:353px;top:215.5px;width:27px;height:11px;overflow:hidden"><div class="t" style="left:0.5px;top:3px;transform:scaleX(0.742);transform-origin:left top;font-size:8.5px;color:#4a4a4a">01</div></div>
<div class="t" style="left:634px;top:218.5px;width:24px;text-align:right;transform:scaleX(0.742);transform-origin:right top;font-size:8.5px;color:#4a4a4a">1</div>
<div style="left:660px;top:215.5px;width:102px;height:11px;overflow:hidden"><div class="t" style="left:0.5px;top:3px;transform:scaleX(0.742);transform-origin:left top;font-size:8.5px;color:#4a4a4a">CONSUMIDOR PADRÃO</div></div>
<div style="left:763px;top:215.5px;width:28px;height:11px;overflow:hidden"><div class="t" style="left:0.5px;top:3px;transform:scaleX(0.742);transform-origin:left top;font-size:8.5px;color:#4a4a4a">PDV</div></div>
<div style="left:792px;top:215.5px;width:65px;height:11px;overflow:hidden"><div class="t" style="left:0.5px;top:3px;transform:scaleX(0.742);transform-origin:left top;font-size:8.5px;color:#4a4a4a">SEM INDENTIFICAÇÃO</div></div>
<div class="t" style="left:40px;top:232.3px;width:42px;text-align:right;transform:scaleX(0.742);transform-origin:right top;font-size:8.5px;color:#4a4a4a">51</div>
<div style="left:84px;top:229.3px;width:50px;height:11px;overflow:hidden"><div class="t" style="left:0.5px;top:3px;transform:scaleX(0.742);transform-origin:left top;font-size:8.5px;color:#4a4a4a">019-000044</div></div>
<div style="left:135px;top:229.3px;width:69px;height:11px;overflow:hidden"><div class="t" style="left:0.5px;top:3px;transform:scaleX(0.742);transform-origin:left top;font-size:8.5px;color:#4a4a4a">22/07/2022 09:53:56</div></div>
<div style="left:205px;top:229.3px;width:69px;height:11px;overflow:hidden"><div class="t" style="left:0.5px;top:3px;transform:scaleX(0.742);transform-origin:left top;font-size:8.5px;color:#4a4a4a">22/07/2022 09:53:56</div></div>
<div style="left:275px;top:229.3px;width:77px;height:11px;overflow:hidden"><div class="t" style="left:0.5px;top:3px;transform:scaleX(0.742);transform-origin:left top;font-size:8.5px;color:#4a4a4a">VENDA PDV</div></div>
<div style="left:353px;top:229.3px;width:27px;height:11px;overflow:hidden"><div class="t" style="left:0.5px;top:3px;transform:scaleX(0.742);transform-origin:left top;font-size:8.5px;color:#4a4a4a">01</div></div>
<div style="left:381px;top:229.3px;width:63px;height:11px;overflow:hidden"><div class="t" style="left:0.5px;top:3px;transform:scaleX(0.742);transform-origin:left top;font-size:8.5px;color:#4a4a4a">0</div></div>
<div style="left:445px;top:229.3px;width:56px;height:11px;overflow:hidden"><div class="t" style="left:0.5px;top:3px;transform:scaleX(0.742);transform-origin:left top;font-size:8.5px;color:#4a4a4a">NÃO FISCAL</div></div>
<div class="t" style="left:634px;top:232.3px;width:24px;text-align:right;transform:scaleX(0.742);transform-origin:right top;font-size:8.5px;color:#4a4a4a">1</div>
<div style="left:660px;top:229.3px;width:102px;height:11px;overflow:hidden"><div class="t" style="left:0.5px;top:3px;transform:scaleX(0.742);transform-origin:left top;font-size:8.5px;color:#4a4a4a">CONSUMIDOR PADRÃO</div></div>
<div style="left:763px;top:229.3px;width:28px;height:11px;overflow:hidden"><div class="t" style="left:0.5px;top:3px;transform:scaleX(0.742);transform-origin:left top;font-size:8.5px;color:#4a4a4a">PDV</div></div>
<div style="left:792px;top:229.3px;width:65px;height:11px;overflow:hidden"><div class="t" style="left:0.5px;top:3px;transform:scaleX(0.742);transform-origin:left top;font-size:8.5px;color:#4a4a4a">SEM INDENTIFICAÇÃO</div></div>
<div style="left:857px;top:77px;width:9.5px;height:231.5px;background:#f0f0f0"></div>
<svg style="position:absolute;left:0;top:0;overflow:visible" width="1" height="1"><path d="M859.65 82l2.1 2l2.1 -2" transform="rotate(180 861.75 83)" fill="none" stroke="#454545" stroke-width="1.3"/><path d="M859.65 303.0l2.1 2l2.1 -2" fill="none" stroke="#454545" stroke-width="1.3"/></svg>
<div style="left:40px;top:104.6px;width:817px;height:1.0px;background:#74b0e6"></div>
<div style="left:40px;top:92px;width:1px;height:14px;background:#1f5fa8"></div>
<div style="left:33px;top:77px;width:1px;height:240px;background:#d6d6d6"></div>
<div style="left:855.5px;top:92px;width:1.0px;height:14px;background:#4a90e0"></div>
<div style="left:33px;top:308.5px;width:824px;height:8.0px;background:#f0f0f0"></div>
<div style="left:46px;top:309.5px;width:61px;height:6.0px;background:#cdcdcd"></div>
<svg style="position:absolute;left:0;top:0;overflow:visible" width="1" height="1"><path d="M42 310.3l-2 2.2l2 2.2" fill="none" stroke="#454545" stroke-width="1.3"/><path d="M851.5 310.3l2 2.2l-2 2.2" fill="none" stroke="#454545" stroke-width="1.3"/></svg>
<div style="left:857px;top:308.5px;width:9.5px;height:8.0px;background:#fff"></div>
<div style="left:34px;top:308.5px;width:2px;height:8.0px;background:#111"></div>
<svg style="position:absolute;left:0;top:0;overflow:visible" width="1" height="1"><path d="M36 97.3l2.8 2l-2.8 2z" fill="#111"/></svg>
<div style="left:866px;top:77px;width:1px;height:240px;background:#d6d6d6"></div>
<div style="left:33px;top:316px;width:834px;height:1px;background:#d6d6d6"></div>
<div style="left:765px;top:319px;width:101px;height:12.5px;background:#cccccc"></div>
<div class="t" style="left:765px;top:321.8px;width:101px;text-align:center;font-size:6.45px;color:#9a9a9a">Transmitir NFC-e pendentes</div>
<div style="left:34px;top:339px;width:833px;height:105px;background:#fff"></div>
<div style="left:34px;top:339px;width:656px;height:15px;background:#fff"></div>
<div style="left:623px;top:339px;width:67px;height:14px;background:#f0f0f0"></div>
<div style="left:34px;top:340px;width:5.200000000000003px;height:95px;background:#f2f2f2"></div>
<div style="left:39.2px;top:354.0px;width:650.8px;height:13.800000000000011px;background:#f3f3f3"></div>
<div style="left:39.2px;top:367.8px;width:650.8px;height:13.800000000000011px;background:#ffffff"></div>
<div style="left:34px;top:367px;width:5.200000000000003px;height:1px;background:#6e6e6e"></div>
<div style="left:34px;top:381px;width:5.200000000000003px;height:1px;background:#6e6e6e"></div>
<div style="left:34px;top:395px;width:5.200000000000003px;height:1px;background:#6e6e6e"></div>
<div style="left:34px;top:409px;width:5.200000000000003px;height:1px;background:#6e6e6e"></div>
<div style="left:34px;top:423px;width:5.200000000000003px;height:1px;background:#6e6e6e"></div>
<div style="left:37.7px;top:340px;width:1.5px;height:95px;background:#737373"></div>
<div style="left:103px;top:340px;width:1px;height:13px;background:#ebebeb"></div>
<div style="left:103px;top:354px;width:1px;height:81px;background:#e0dbf4"></div>
<div style="left:265px;top:340px;width:1px;height:13px;background:#ebebeb"></div>
<div style="left:265px;top:354px;width:1px;height:81px;background:#e0dbf4"></div>
<div style="left:296px;top:340px;width:1px;height:13px;background:#ebebeb"></div>
<div style="left:296px;top:354px;width:1px;height:81px;background:#e0dbf4"></div>
<div style="left:351px;top:340px;width:1px;height:13px;background:#ebebeb"></div>
<div style="left:351px;top:354px;width:1px;height:81px;background:#e0dbf4"></div>
<div style="left:408px;top:340px;width:1px;height:13px;background:#ebebeb"></div>
<div style="left:408px;top:354px;width:1px;height:81px;background:#e0dbf4"></div>
<div style="left:460px;top:340px;width:1px;height:13px;background:#ebebeb"></div>
<div style="left:460px;top:354px;width:1px;height:81px;background:#e0dbf4"></div>
<div style="left:513px;top:340px;width:1px;height:13px;background:#ebebeb"></div>
<div style="left:513px;top:354px;width:1px;height:81px;background:#e0dbf4"></div>
<div style="left:564px;top:340px;width:1px;height:13px;background:#ebebeb"></div>
<div style="left:564px;top:354px;width:1px;height:81px;background:#e0dbf4"></div>
<div style="left:595px;top:340px;width:1px;height:13px;background:#ebebeb"></div>
<div style="left:595px;top:354px;width:1px;height:81px;background:#e0dbf4"></div>
<div style="left:623px;top:340px;width:1px;height:13px;background:#ebebeb"></div>
<div style="left:623px;top:354px;width:1px;height:81px;background:#e0dbf4"></div>
<div style="left:34px;top:353px;width:656px;height:1px;background:#646464"></div>
<div class="t" style="left:39.2px;top:343.7px;width:63.8px;text-align:center;font-size:6.9px;color:#2a2a2a">ID</div>
<div class="t" style="left:103px;top:343.7px;width:162px;text-align:center;font-size:6.9px;color:#2a2a2a">Produto</div>
<div class="t" style="left:265px;top:343.7px;width:31px;text-align:center;font-size:6.9px;color:#2a2a2a">Qtd.</div>
<div class="t" style="left:296px;top:343.7px;width:55px;text-align:center;font-size:6.9px;color:#2a2a2a">Vl.líquido(unit.)</div>
<div class="t" style="left:351px;top:343.7px;width:57px;text-align:center;font-size:6.9px;color:#2a2a2a">Vl.bruto(unit.)</div>
<div class="t" style="left:408px;top:343.7px;width:52px;text-align:center;font-size:6.9px;color:#2a2a2a">Vl.acréscimo</div>
<div class="t" style="left:460px;top:343.7px;width:53px;text-align:center;font-size:6.9px;color:#2a2a2a">Vl.desconto</div>
<div class="t" style="left:513px;top:343.7px;width:51px;text-align:center;font-size:6.9px;color:#2a2a2a">Vl.líquido</div>
<div class="t" style="left:564px;top:343.7px;width:31px;text-align:center;font-size:6.9px;color:#2a2a2a">Nro.item</div>
<div class="t" style="left:596.5px;top:343.7px;font-size:6.9px;color:#2a2a2a">Estoque</div>
<div class="t" style="left:623px;top:343.7px;width:67px;text-align:center;font-size:6.9px;color:#2a2a2a"></div>
<div style="left:40.2px;top:353.4px;width:62.8px;height:11px;overflow:hidden"><div class="t" style="left:0.5px;top:3px;transform:scaleX(0.742);transform-origin:left top;font-size:8.5px;color:#222">00014</div></div>
<div style="left:104px;top:353.4px;width:161px;height:11px;overflow:hidden"><div class="t" style="left:0.5px;top:3px;transform:scaleX(0.742);transform-origin:left top;font-size:8.5px;color:#222">MONTAGEM</div></div>
<div class="t" style="left:265px;top:356.4px;width:30px;text-align:right;transform:scaleX(0.742);transform-origin:right top;font-size:8.5px;color:#222">1,00</div>
<div class="t" style="left:296px;top:356.4px;width:54px;text-align:right;transform:scaleX(0.742);transform-origin:right top;font-size:8.5px;color:#222">100,00</div>
<div class="t" style="left:351px;top:356.4px;width:56px;text-align:right;transform:scaleX(0.742);transform-origin:right top;font-size:8.5px;color:#222">100,00</div>
<div class="t" style="left:513px;top:356.4px;width:50px;text-align:right;transform:scaleX(0.742);transform-origin:right top;font-size:8.5px;color:#222">100,00</div>
<div class="t" style="left:564px;top:356.4px;width:30px;text-align:right;transform:scaleX(0.742);transform-origin:right top;font-size:8.5px;color:#222">1</div>
<div style="left:596px;top:353.4px;width:27px;height:11px;overflow:hidden"><div class="t" style="left:0.5px;top:3px;transform:scaleX(0.742);transform-origin:left top;font-size:8.5px;color:#222">Saída</div></div>
<div style="left:40.2px;top:367.2px;width:62.8px;height:11px;overflow:hidden"><div class="t" style="left:0.5px;top:3px;transform:scaleX(0.742);transform-origin:left top;font-size:8.5px;color:#4a4a4a">000007</div></div>
<div style="left:104px;top:367.2px;width:161px;height:11px;overflow:hidden"><div class="t" style="left:0.5px;top:3px;transform:scaleX(0.742);transform-origin:left top;font-size:8.5px;color:#4a4a4a">ARMAÇÃO VERMELHA</div></div>
<div class="t" style="left:265px;top:370.2px;width:30px;text-align:right;transform:scaleX(0.742);transform-origin:right top;font-size:8.5px;color:#4a4a4a">1,00</div>
<div class="t" style="left:296px;top:370.2px;width:54px;text-align:right;transform:scaleX(0.742);transform-origin:right top;font-size:8.5px;color:#4a4a4a">500,00</div>
<div class="t" style="left:351px;top:370.2px;width:56px;text-align:right;transform:scaleX(0.742);transform-origin:right top;font-size:8.5px;color:#4a4a4a">500,00</div>
<div class="t" style="left:513px;top:370.2px;width:50px;text-align:right;transform:scaleX(0.742);transform-origin:right top;font-size:8.5px;color:#4a4a4a">500,00</div>
<div class="t" style="left:564px;top:370.2px;width:30px;text-align:right;transform:scaleX(0.742);transform-origin:right top;font-size:8.5px;color:#4a4a4a">2</div>
<div style="left:596px;top:367.2px;width:27px;height:11px;overflow:hidden"><div class="t" style="left:0.5px;top:3px;transform:scaleX(0.742);transform-origin:left top;font-size:8.5px;color:#4a4a4a">Saída</div></div>
<div style="left:40px;top:361px;width:34px;height:1px;background:#383838"></div>
<div style="left:104px;top:361px;width:160px;height:1px;background:#383838"></div>
<div style="left:283px;top:361px;width:12px;height:1px;background:#383838"></div>
<div style="left:332px;top:361px;width:18px;height:1px;background:#383838"></div>
<div style="left:388px;top:361px;width:19px;height:1px;background:#383838"></div>
<div style="left:543px;top:361px;width:20px;height:1px;background:#383838"></div>
<div style="left:591px;top:361px;width:3px;height:1px;background:#383838"></div>
<div style="left:597px;top:361px;width:12px;height:1px;background:#383838"></div>
<div style="left:691px;top:339px;width:11px;height:96px;background:#f0f0f0"></div>
<svg style="position:absolute;left:0;top:0;overflow:visible" width="1" height="1"><path d="M694.4 344l2.1 2l2.1 -2" transform="rotate(180 696.5 345)" fill="none" stroke="#454545" stroke-width="1.3"/><path d="M694.4 429.5l2.1 2l2.1 -2" fill="none" stroke="#454545" stroke-width="1.3"/></svg>
<div style="left:623px;top:353px;width:68px;height:1px;background:#646464"></div>
<div style="left:39.2px;top:354px;width:651.8px;height:13.5px;border:1px solid #5aa0e6;border-top:none"></div>
<div style="left:39.2px;top:354px;width:1.0px;height:13px;background:#1f5fa8"></div>
<div style="left:34px;top:435px;width:657px;height:9px;background:#f0f0f0"></div>
<svg style="position:absolute;left:0;top:0;overflow:visible" width="1" height="1"><path d="M43 437.3l-2 2.2l2 2.2" fill="none" stroke="#454545" stroke-width="1.3"/><path d="M685.5 437.3l2 2.2l-2 2.2" fill="none" stroke="#454545" stroke-width="1.3"/></svg>
<div style="left:691px;top:435px;width:11px;height:9px;background:#fff"></div>
<div style="left:34.5px;top:434.5px;width:2.0px;height:8.5px;background:#111"></div>
<svg style="position:absolute;left:0;top:0;overflow:visible" width="1" height="1"><path d="M36.3 358.8l2.6 1.9l-2.6 1.9z" fill="#111"/></svg>
<div style="left:702px;top:339px;width:1px;height:105px;background:#fff"></div>
<div style="left:703px;top:339px;width:152px;height:15px;background:#fff"></div>
<div style="left:703px;top:340px;width:5.5px;height:95px;background:#f2f2f2"></div>
<div style="left:708.5px;top:354.0px;width:146.5px;height:13.800000000000011px;background:#f3f3f3"></div>
<div style="left:708.5px;top:367.8px;width:146.5px;height:13.800000000000011px;background:#ffffff"></div>
<div style="left:708.5px;top:381.6px;width:146.5px;height:13.800000000000011px;background:#e1f0fc"></div>
<div style="left:708.5px;top:395.4px;width:146.5px;height:13.800000000000011px;background:#ffffff"></div>
<div style="left:708.5px;top:409.2px;width:146.5px;height:13.800000000000011px;background:#e1f0fc"></div>
<div style="left:703px;top:367px;width:5.5px;height:1px;background:#6e6e6e"></div>
<div style="left:703px;top:381px;width:5.5px;height:1px;background:#6e6e6e"></div>
<div style="left:703px;top:395px;width:5.5px;height:1px;background:#6e6e6e"></div>
<div style="left:703px;top:409px;width:5.5px;height:1px;background:#6e6e6e"></div>
<div style="left:703px;top:423px;width:5.5px;height:1px;background:#6e6e6e"></div>
<div style="left:707.5px;top:340px;width:1.0px;height:95px;background:#737373"></div>
<div style="left:731px;top:340px;width:1px;height:13px;background:#ebebeb"></div>
<div style="left:731px;top:354px;width:1px;height:81px;background:#e0dbf4"></div>
<div style="left:809px;top:340px;width:1px;height:13px;background:#ebebeb"></div>
<div style="left:809px;top:354px;width:1px;height:81px;background:#e0dbf4"></div>
<div style="left:703px;top:353px;width:152px;height:1px;background:#646464"></div>
<div class="t" style="left:710.0px;top:343.7px;font-size:6.9px;color:#2a2a2a">ID doc.</div>
<div class="t" style="left:731px;top:343.7px;width:78px;text-align:center;font-size:6.9px;color:#2a2a2a">Pagamento</div>
<div class="t" style="left:809px;top:343.7px;width:46px;text-align:center;font-size:6.9px;color:#2a2a2a">Vl.líquido</div>
<div style="left:709.5px;top:353.4px;width:21.5px;height:11px;overflow:hidden"><div class="t" style="left:0.5px;top:3px;transform:scaleX(0.742);transform-origin:left top;font-size:8.5px;color:#222">TF</div></div>
<div style="left:732px;top:353.4px;width:77px;height:11px;overflow:hidden"><div class="t" style="left:0.5px;top:3px;transform:scaleX(0.742);transform-origin:left top;font-size:8.5px;color:#222">CREDIARIO</div></div>
<div class="t" style="left:809px;top:356.4px;width:45px;text-align:right;transform:scaleX(0.742);transform-origin:right top;font-size:8.5px;color:#222">100,00</div>
<div style="left:709.5px;top:367.2px;width:21.5px;height:11px;overflow:hidden"><div class="t" style="left:0.5px;top:3px;transform:scaleX(0.742);transform-origin:left top;font-size:8.5px;color:#4a4a4a">TF</div></div>
<div style="left:732px;top:367.2px;width:77px;height:11px;overflow:hidden"><div class="t" style="left:0.5px;top:3px;transform:scaleX(0.742);transform-origin:left top;font-size:8.5px;color:#4a4a4a">CREDIARIO</div></div>
<div class="t" style="left:809px;top:370.2px;width:45px;text-align:right;transform:scaleX(0.742);transform-origin:right top;font-size:8.5px;color:#4a4a4a">100,00</div>
<div style="left:709.5px;top:381.0px;width:21.5px;height:11px;overflow:hidden"><div class="t" style="left:0.5px;top:3px;transform:scaleX(0.742);transform-origin:left top;font-size:8.5px;color:#4a4a4a">TF</div></div>
<div style="left:732px;top:381.0px;width:77px;height:11px;overflow:hidden"><div class="t" style="left:0.5px;top:3px;transform:scaleX(0.742);transform-origin:left top;font-size:8.5px;color:#4a4a4a">CREDIARIO</div></div>
<div class="t" style="left:809px;top:384.0px;width:45px;text-align:right;transform:scaleX(0.742);transform-origin:right top;font-size:8.5px;color:#4a4a4a">100,00</div>
<div style="left:709.5px;top:394.79999999999995px;width:21.5px;height:11px;overflow:hidden"><div class="t" style="left:0.5px;top:3px;transform:scaleX(0.742);transform-origin:left top;font-size:8.5px;color:#4a4a4a">TF</div></div>
<div style="left:732px;top:394.79999999999995px;width:77px;height:11px;overflow:hidden"><div class="t" style="left:0.5px;top:3px;transform:scaleX(0.742);transform-origin:left top;font-size:8.5px;color:#4a4a4a">CREDIARIO</div></div>
<div class="t" style="left:809px;top:397.79999999999995px;width:45px;text-align:right;transform:scaleX(0.742);transform-origin:right top;font-size:8.5px;color:#4a4a4a">100,00</div>
<div style="left:709.5px;top:408.59999999999997px;width:21.5px;height:11px;overflow:hidden"><div class="t" style="left:0.5px;top:3px;transform:scaleX(0.742);transform-origin:left top;font-size:8.5px;color:#4a4a4a">TF</div></div>
<div style="left:732px;top:408.59999999999997px;width:77px;height:11px;overflow:hidden"><div class="t" style="left:0.5px;top:3px;transform:scaleX(0.742);transform-origin:left top;font-size:8.5px;color:#4a4a4a">CREDIARIO</div></div>
<div class="t" style="left:809px;top:411.59999999999997px;width:45px;text-align:right;transform:scaleX(0.742);transform-origin:right top;font-size:8.5px;color:#4a4a4a">100,00</div>
<div style="left:855px;top:339px;width:11px;height:96px;background:#f0f0f0"></div>
<svg style="position:absolute;left:0;top:0;overflow:visible" width="1" height="1"><path d="M858.4 344l2.1 2l2.1 -2" transform="rotate(180 860.5 345)" fill="none" stroke="#454545" stroke-width="1.3"/><path d="M858.4 429.5l2.1 2l2.1 -2" fill="none" stroke="#454545" stroke-width="1.3"/></svg>
<div style="left:708.5px;top:354px;width:147.5px;height:13.5px;border:1px solid #5aa0e6;border-top:none"></div>
<div style="left:708px;top:354px;width:1px;height:13px;background:#1f5fa8"></div>
<div style="left:703px;top:435px;width:152px;height:9px;background:#f0f0f0"></div>
<svg style="position:absolute;left:0;top:0;overflow:visible" width="1" height="1"><path d="M712 437.3l-2 2.2l2 2.2" fill="none" stroke="#454545" stroke-width="1.3"/><path d="M849.5 437.3l2 2.2l-2 2.2" fill="none" stroke="#454545" stroke-width="1.3"/></svg>
<div style="left:855px;top:435px;width:11px;height:9px;background:#fff"></div>
<div style="left:704px;top:435px;width:2px;height:8.5px;background:#111"></div>
<svg style="position:absolute;left:0;top:0;overflow:visible" width="1" height="1"><path d="M705.3 358.8l2.6 1.9l-2.6 1.9z" fill="#111"/></svg>
<div style="left:33px;top:338px;width:833px;height:2px;background:#f81a1a"></div>
<div style="left:32.6px;top:338px;width:1.3999999999999986px;height:107px;background:#f81a1a"></div>
<div style="left:865.6px;top:338px;width:1.3999999999999773px;height:107px;background:#f81a1a"></div>
<div style="left:33px;top:443.8px;width:834px;height:1.1999999999999886px;background:#f81a1a"></div>
<svg style="position:absolute;left:0;top:0;overflow:visible" width="1" height="1"><path d="M10.9 37.5l3.3 -2.2v4.4z" fill="#f6f0f8"/><path d="M13.6 37.5c1.3 -0.4 1.8 -1.8 1.9 -4" fill="none" stroke="#f6f0f8" stroke-width="1.5"/><path d="M20.1 38.7l-3.3 2.2v-4.4z" fill="#f6f0f8"/><path d="M17.4 38.7c-1.3 0.4 -1.8 1.8 -1.9 4" fill="none" stroke="#f6f0f8" stroke-width="1.5"/></svg>
<svg style="position:absolute;left:0;top:0;overflow:visible" width="1" height="1"><path d="M11.3 47.3h8.8l-2.9 3.4v5h-3v-5z" fill="none" stroke="#f6f0f8" stroke-width="1.1" stroke-linejoin="round"/></svg>
<svg style="position:absolute;left:0;top:0;overflow:visible" width="1" height="1"><path d="M11 60h9.2l-3.9 4.6l3.9 4.5h-9.2l3.9 -4.5z" fill="#a3a89c"/><ellipse cx="15.6" cy="61.6" rx="2.2" ry="1.2" fill="#f4f4f0"/><ellipse cx="15.6" cy="68" rx="1.8" ry="1" fill="#f4f4f0"/></svg>
<svg style="position:absolute;left:0;top:0;overflow:visible" width="1" height="1"><circle cx="16.6" cy="77" r="3.1" fill="none" stroke="#f6f0f8" stroke-width="1.2"/><path d="M14.4 79.2l-3.2 3.2" stroke="#f6f0f8" stroke-width="1.5"/><circle cx="16.6" cy="77" r="1" fill="#d8d0dc"/></svg>
<svg style="position:absolute;left:0;top:0;overflow:visible" width="1" height="1"><path d="M11.2 88.3h1.6M11.2 90.8h3M11.2 93.3h3.8M11.2 95.8h4.6" stroke="#f6f0f8" stroke-width="1.2"/><path d="M18.6 88.5v6" stroke="#f6f0f8" stroke-width="1.1"/><path d="M17 93.3h3.2l-1.6 2.2z" fill="#f6f0f8"/></svg>
<svg style="position:absolute;left:0;top:0;overflow:visible" width="1" height="1"><rect x="13.3" y="107" width="4.6" height="3" fill="none" stroke="#f6f0f8" stroke-width="1"/><rect x="11" y="109.5" width="9.2" height="4.8" rx="1" fill="#f6f0f8"/><rect x="13.3" y="112.3" width="4.6" height="3.2" fill="#340f40" stroke="#f6f0f8" stroke-width="0.9"/></svg>
<svg style="position:absolute;left:0;top:0;overflow:visible" width="1" height="1"><rect x="12.5" y="120.5" width="6" height="8.2" rx="0.6" fill="none" stroke="#f6f0f8" stroke-width="1"/><rect x="14.3" y="122.3" width="2.4" height="4.6" fill="#9c8ca0"/></svg>
<svg style="position:absolute;left:0;top:0;overflow:visible" width="1" height="1"><path d="M11.3 134h7.6l1.1 1.1v6.9h-8.7z" fill="none" stroke="#f6f0f8" stroke-width="1.1"/><rect x="13" y="134" width="5" height="2.4" fill="#f6f0f8"/><rect x="12.8" y="138.3" width="5.8" height="3.3" fill="#3a2a40" stroke="#f6f0f8" stroke-width="0.8"/></svg>
<div style="left:7px;top:149px;width:17px;height:1px;background:#7a5a84"></div>
</body></html>
